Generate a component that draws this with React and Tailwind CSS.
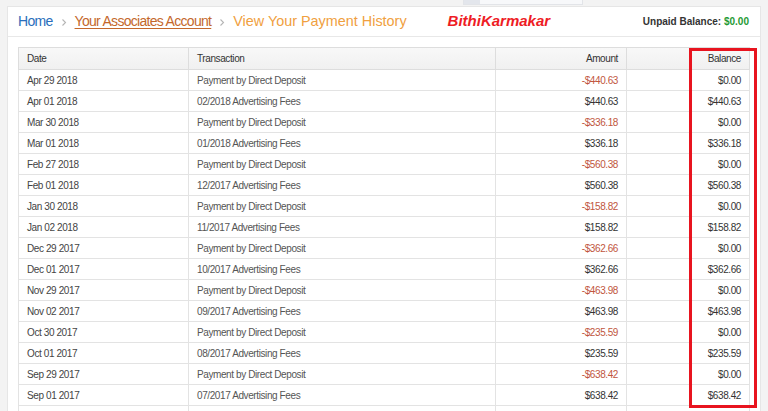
import React from 'react';

const ROWS = [
  ['Apr 29 2018', 'Payment by Direct Deposit', '-$440.63', '$0.00'],
  ['Apr 01 2018', '02/2018 Advertising Fees', '$440.63', '$440.63'],
  ['Mar 30 2018', 'Payment by Direct Deposit', '-$336.18', '$0.00'],
  ['Mar 01 2018', '01/2018 Advertising Fees', '$336.18', '$336.18'],
  ['Feb 27 2018', 'Payment by Direct Deposit', '-$560.38', '$0.00'],
  ['Feb 01 2018', '12/2017 Advertising Fees', '$560.38', '$560.38'],
  ['Jan 30 2018', 'Payment by Direct Deposit', '-$158.82', '$0.00'],
  ['Jan 02 2018', '11/2017 Advertising Fees', '$158.82', '$158.82'],
  ['Dec 29 2017', 'Payment by Direct Deposit', '-$362.66', '$0.00'],
  ['Dec 01 2017', '10/2017 Advertising Fees', '$362.66', '$362.66'],
  ['Nov 29 2017', 'Payment by Direct Deposit', '-$463.98', '$0.00'],
  ['Nov 02 2017', '09/2017 Advertising Fees', '$463.98', '$463.98'],
  ['Oct 30 2017', 'Payment by Direct Deposit', '-$235.59', '$0.00'],
  ['Oct 01 2017', '08/2017 Advertising Fees', '$235.59', '$235.59'],
  ['Sep 29 2017', 'Payment by Direct Deposit', '-$638.42', '$0.00'],
  ['Sep 01 2017', '07/2017 Advertising Fees', '$638.42', '$638.42'],
];

const Chevron = () => (
  <svg width="6" height="9" viewBox="0 0 6 9" className="mx-[8px] mt-[2px]">
    <path d="M1.5 1.5 L4.5 4.5 L1.5 7.5" fill="none" stroke="#b5b5b5" strokeWidth="1.1" />
  </svg>
);

const App = () => {
  return (
    <div className="relative h-[411px] w-[768px] overflow-hidden bg-[#f3f3f3] font-['Liberation_Sans',Arial,sans-serif]">
      {/* strip above the panel */}
      <div className="h-[6px] pl-[463px]">
        <div className="flex h-[5px] w-[120px] border border-t-0 border-[#e2e4e8] bg-[#f7f8fa]">
          <div className="w-[16px] bg-[#e3e6ec]" />
        </div>
      </div>

      <div className="ml-[7px] w-[754px] border border-b-0 border-[#e6e6e6] bg-white">
        {/* header */}
        <div className="flex h-[30px] items-center border-b border-[#e8e8e8] px-[10px]">
          <span className="text-[14px] tracking-[-0.05em] text-[#2a6ebb]">Home</span>
          <Chevron />
          <span className="text-[14px] tracking-[-0.05em] text-[#c4682b] underline underline-offset-2">Your Associates Account</span>
          <Chevron />
          <span className="text-[14.4px] text-[#f0a040]">View Your Payment History</span>
          <span className="ml-[41px] text-[15px] font-bold italic text-[#ee1c25]">BithiKarmakar</span>
          <span className="ml-auto mr-[1px] text-[10px] font-bold text-[#333]">
            Unpaid Balance: <span className="text-[#1f9a34]">$0.00</span>
          </span>
        </div>

        {/* table */}
        <div className="px-[10px] pt-[10px]">
          <table className="w-[731px] table-fixed border-collapse text-[10px] tracking-[-0.04em] text-[#444]">
            <colgroup>
              <col className="w-[170px]" />
              <col className="w-[307px]" />
              <col className="w-[131px]" />
              <col className="w-[123px]" />
            </colgroup>
            <thead>
              <tr className="h-[22px] bg-gradient-to-b from-[#f8f8f8] to-[#f0f0f0] text-[#333]">
                <th className="border border-[#dddddd] px-[8px] text-left font-normal">Date</th>
                <th className="border border-[#dddddd] px-[8px] text-left font-normal">Transaction</th>
                <th className="border border-[#dddddd] px-[8px] text-right font-normal">Amount</th>
                <th className="border border-[#dddddd] px-[8px] text-right font-normal">Balance</th>
              </tr>
            </thead>
            <tbody>
              {ROWS.map(r => (
                <tr key={r[0]} className="h-[21px]">
                  <td className="border border-[#e3e3e3] px-[8px]">{r[0]}</td>
                  <td className="border border-[#e3e3e3] px-[8px] text-[#555]">{r[1]}</td>
                  <td className={`border border-[#e3e3e3] px-[8px] text-right ${r[2].startsWith('-') ? 'text-[#bf5640]' : 'text-[#333]'}`}>{r[2]}</td>
                  <td className="border border-[#e3e3e3] px-[8px] text-right text-[#333]">{r[3]}</td>
                </tr>
              ))}
              <tr className="h-[21px]">
                <td className="border border-[#e3e3e3] px-[8px]">&nbsp;</td>
                <td className="border border-[#e3e3e3] px-[8px]">&nbsp;</td>
                <td className="border border-[#e3e3e3] px-[8px]">&nbsp;</td>
                <td className="border border-[#e3e3e3] px-[8px]">&nbsp;</td>
              </tr>
            </tbody>
          </table>
        </div>
      </div>

      {/* red annotation box */}
      <div className="absolute left-[689px] top-[48px] h-[360px] w-[68px] border-[3px] border-[#e8141f]" />
    </div>
  );
};

export default App;
